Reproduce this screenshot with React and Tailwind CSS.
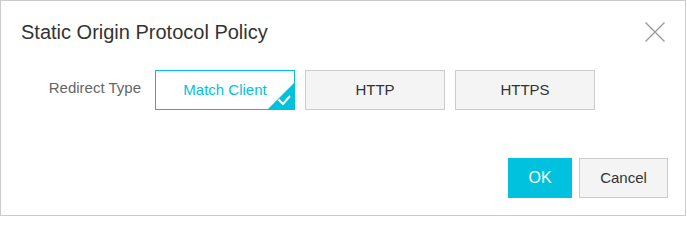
import React from "react";

function CornerCheck() {
  return (
    <svg
      className="absolute right-0 bottom-0"
      width="26"
      height="26"
      viewBox="0 0 26 26"
    >
      <polygon points="26,0 26,26 0,26" fill="#00c1de" />
      <path
        d="M10.5 16.5 L15 21 L22 13"
        fill="none"
        stroke="#ffffff"
        strokeWidth="2"
      />
    </svg>
  );
}

export default function App() {
  const font = { fontFamily: '"Liberation Sans", Arial, sans-serif' };
  return (
    <div className="w-[687px] h-[217px] bg-white" style={font}>
      <div className="w-[686px] h-[216px] border border-[#cccccc] bg-white flex flex-col">
        <div className="flex items-center justify-between pl-[20px] pr-[20px] pt-[17px]">
          <div className="text-[20px] leading-[28px] text-[#333333]">
            Static Origin Protocol Policy
          </div>
          <svg width="20" height="20" viewBox="0 0 20 20">
            <path
              d="M0.5 0.5 L19.5 19.5 M19.5 0.5 L0.5 19.5"
              stroke="#9a9a9a"
              strokeWidth="1.3"
              fill="none"
            />
          </svg>
        </div>
        <div className="flex items-start pl-[20px] mt-[24px]">
          <div className="w-[120px] text-right text-[15px] leading-[36px] text-[#666666]">
            Redirect Type
          </div>
          <div className="flex gap-[10px] ml-[14px]">
            <div className="relative w-[140px] h-[40px] border border-[#00c1de] bg-white flex items-center justify-center text-[15px] text-[#00c1de] pt-[1px]">
              Match Client
              <CornerCheck />
            </div>
            <div className="w-[140px] h-[40px] border border-[#cccccc] bg-[#f4f4f4] flex items-center justify-center text-[15px] text-[#333333] pt-[1px]">
              HTTP
            </div>
            <div className="w-[140px] h-[40px] border border-[#cccccc] bg-[#f4f4f4] flex items-center justify-center text-[15px] text-[#333333] pt-[1px]">
              HTTPS
            </div>
          </div>
        </div>
        <div className="flex justify-end gap-[7px] pr-[17px] mt-[48px]">
          <button className="w-[64px] h-[40px] bg-[#00c1de] text-white text-[16px]">
            OK
          </button>
          <button className="w-[89px] h-[40px] border border-[#cccccc] bg-[#f4f4f4] text-[#333333] text-[15px]">
            Cancel
          </button>
        </div>
      </div>
    </div>
  );
}
